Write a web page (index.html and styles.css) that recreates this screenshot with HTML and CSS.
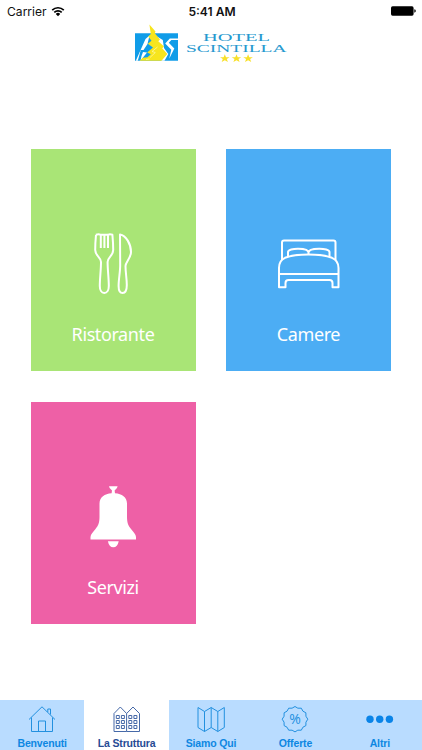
FILE: index.html
```html
<!DOCTYPE html>
<html lang="it">
<head>
    <meta charset="UTF-8">
    <meta name="viewport" content="width=device-width, initial-scale=1.0">
    <title>Hotel Scintilla</title>
    <link rel="stylesheet" href="styles.css">
</head>
<body>
    <div class="status">
        <div class="carrier">
            <span>Carrier</span>
            <svg class="wifi" width="14" height="11" viewBox="0 0 14 11">
                <path d="M1.2 4.1A8.3 8.3 0 0 1 12.8 4.1M3.3 6.3A5.3 5.3 0 0 1 10.7 6.3"/>
                <path class="dot" d="M7 10.2L4.8 7.9A3.2 3.2 0 0 1 9.2 7.9Z"/>
            </svg>
        </div>
        <div class="time">5:41 AM</div>
        <svg class="battery" width="25" height="10" viewBox="0 0 25 10">
            <rect x="0" y="0.3" width="22.6" height="9.4" rx="1.6"/>
            <path d="M23.3 3.3Q24.8 3.6 24.8 5T23.3 6.7Z"/>
        </svg>
    </div>

    <div class="header">
        <svg width="154" height="40" viewBox="134 24 154 40">
            <path class="logo-blue" d="M135 33.2H178V60.8H135Z"/>
            <path class="logo-white" d="M135.8 60.8L145.5 39L149.5 35.5L147.5 44L143.5 50H140.8L137.8 60.8Z"/>
            <path class="logo-white" d="M143 52L147 52.5L143 57.5L140.5 60.8L141.5 56Z"/>
            <path class="logo-white" d="M157 36.5L162.8 40L164 48L168.3 54L164.5 60.8H161L164 55L159 50L161 47L154 42Z"/>
            <path class="logo-white" d="M178 40H171.3L168.8 42.8L174.3 48.5L169.2 58.8L171.3 49.8L165.2 43.5L169.8 38.4H178Z"/>
            <path class="logo-bolt" d="M149.4 24.6L155.5 31.5L154.8 33.2L160 39.5L158.3 41.2L164 46.5L162.2 48.2L167.3 54L161.5 60.8H139.5L142.8 57.8L147.5 57.3L150.8 54.2L147.2 52.6L153 47.5L147.8 43.8L151.5 40.8L148.3 36.5L150.8 34Z"/>
            <path class="logo-cut" d="M150 57.5L155.3 52.5L152 51.5L157.5 47M146 59.5L149.5 59"/>
            <text x="203" y="40.8" textLength="67" lengthAdjust="spacingAndGlyphs">HOTEL</text>
            <text x="186" y="52.1" textLength="100.5" lengthAdjust="spacingAndGlyphs">SCINTILLA</text>
            <g class="stars">
                <path id="star" d="M224.8 54.2L226 57.3H229.6L226.8 59.1L227.9 62L224.8 60.3L221.7 62L222.8 59.1L220 57.3H223.6Z"/>
                <use href="#star" x="11.7"/>
                <use href="#star" x="23.3"/>
            </g>
        </svg>
    </div>

    <div class="tiles">
        <div class="tile green">
            <svg width="70" height="66" viewBox="78 231 70 66">
                <path d="M96 234.8Q95.2 243 95.2 250C95.2 256 101 257 101 262C101 270 99.8 278 99.8 286C99.8 290 101.5 293 104.3 293S108.8 290 108.8 286C108.8 278 107.6 270 107.6 262C107.6 257 113.2 256 113.2 250Q113.2 243 112.4 234.8Q109.8 233.8 108 234.8V248M96 234.8Q98.5 233.8 100.8 234.8V248M104.4 234.5V248M100.8 234.8H108"/>
                <path d="M120 234.5C126 235.5 131 244 131 252C131 258 125.5 262 125.5 266C125.5 273 126.8 278 126.8 285C126.8 290 125.3 293 122.6 293S118.6 290 118.6 286C118.6 279 120.2 272 120.2 265Z"/>
            </svg>
            <span>Ristorante</span>
        </div>
        <div class="tile blue">
            <svg width="70" height="66" viewBox="274 231 70 66">
                <path d="M282 260V242.5Q282 240.5 284 240.5H333.5Q335.5 240.5 335.5 242.5V260"/>
                <path d="M288 256.5V252C288 247.5 308.5 247.5 308.5 252.5V254M308.5 252.5C308.5 247.5 329.5 247.5 329.5 252V256.5"/>
                <path d="M279 287.2V268C279 262 281 259.5 285 257.8C297 253.5 320 253.5 332 257.8C336 259.5 338.5 262 338.5 268V287.2H332.5V283Q332.5 280 329.5 280H288.5Q285.5 280 285.5 283V287.2ZM279 274H338.5"/>
            </svg>
            <span>Camere</span>
        </div>
        <div class="tile pink">
            <svg width="70" height="66" viewBox="78 484 70 66">
                <path class="solid" d="M109 486.2H117.6Q117.6 488.2 114.6 490.6L115 493.3C122 494 126.8 497 127 503.5V517C127 523 128.5 526 131 529C133.6 532 135.8 534.5 136 537V539.4H90.5V537C90.7 534.5 92.9 532 95.5 529C98 526 99.5 523 99.5 517V503.5C99.7 497 104.5 494 111.6 493.3L112 490.6Q109 488.2 109 486.2Z"/>
                <path class="solid" d="M107.9 541.2H118.7Q117.5 547.2 113.3 547.2T107.9 541.2Z"/>
            </svg>
            <span>Servizi</span>
        </div>
    </div>

    <div class="tabs">
        <div class="tab">
            <svg width="30" height="30" viewBox="27 704 30 30">
                <path d="M29 719.5L42 706.8L55 719.5M31.5 717.5V731.5H52.5V717.5M38.5 731.5V721H45.5V731.5M47.8 712V709H50.5V714.5"/>
            </svg>
            <span>Benvenuti</span>
        </div>
        <div class="tab active">
            <svg width="30" height="30" viewBox="112 704 30 30">
                <path d="M114 731.5V713.5L120.3 707L126.6 713.5V731.5ZM126.6 713.5L133 707L139.5 713.5V731.5H126.6"/>
                <path d="M116.3 715.5H119.3V718.5H116.3ZM121.4 715.5H124.4V718.5H121.4ZM128.8 715.5H131.8V718.5H128.8ZM133.9 715.5H136.9V718.5H133.9ZM116.3 720.5H119.3V723.5H116.3ZM121.4 720.5H124.4V723.5H121.4ZM128.8 720.5H131.8V723.5H128.8ZM133.9 720.5H136.9V723.5H133.9ZM116.3 725.5H119.3V728.5H116.3ZM121.4 725.5H124.4V728.5H121.4ZM128.8 725.5H131.8V728.5H128.8ZM133.9 725.5H136.9V728.5H133.9Z"/>
            </svg>
            <span>La Struttura</span>
        </div>
        <div class="tab">
            <svg width="30" height="30" viewBox="196 704 30 30">
                <path d="M198 707.5L204.5 711.5L211.2 707.5L217.8 711.5L224.3 707.5V727.5L217.8 731.5L211.2 727.5L204.5 731.5L198 727.5ZM204.5 711.5V731.5M211.2 707.5V727.5M217.8 711.5V731.5"/>
            </svg>
            <span>Siamo Qui</span>
        </div>
        <div class="tab">
            <svg width="30" height="30" viewBox="280 704 30 30">
                <path d="M295 706.5Q297.5 709 301.3 708.2Q302.2 711.8 305.9 712.8Q305 716.5 307.8 719.2Q305 722 305.9 725.6Q302.2 726.6 301.3 730.2Q297.5 729.3 295 731.9Q292.3 729.3 288.7 730.2Q287.7 726.6 284.1 725.6Q285 722 282.2 719.2Q285 716.5 284.1 712.8Q287.7 711.8 288.7 708.2Q292.3 709 295 706.5Z"/>
                <text x="295" y="724.3" text-anchor="middle">%</text>
            </svg>
            <span>Offerte</span>
        </div>
        <div class="tab">
            <svg class="more" width="30" height="30" viewBox="365 704 30 30">
                <circle cx="370" cy="719.2" r="3.7"/>
                <circle cx="379.7" cy="719.2" r="3.7"/>
                <circle cx="389.4" cy="719.2" r="3.7"/>
            </svg>
            <span>Altri</span>
        </div>
    </div>
</body>
</html>
```
FILE: styles.css
```css
body {
    display: flex;
    flex-direction: column;
    height: 750px;
    margin: 0;
    background: #fff;
    font-family: "Liberation Sans", Arial, sans-serif;
    overflow: hidden;
}
svg {
    display: block;
}

/* status bar */
.status {
    display: grid;
    grid-template-columns: 1fr auto 1fr;
    align-items: center;
    height: 22px;
    padding: 0 6px 0 7px;
    font-family: Inter, sans-serif;
    font-size: 12.1px;
    color: #111;
}
.carrier {
    display: flex;
    align-items: center;
    gap: 4px;
}
.wifi {
    fill: none;
    stroke: #000;
    stroke-width: 1.7;
}
.wifi .dot {
    fill: #000;
    stroke: none;
}
.time {
    padding-left: 1px;
    font-weight: 600;
}
.battery {
    justify-self: end;
}

/* logo */
.header {
    height: 127px;
    padding: 2px 0 0 134px;
    box-sizing: border-box;
}
.header text {
    font-family: "Liberation Serif", serif;
    font-size: 11px;
    fill: #2799cf;
}
.logo-blue {
    fill: #109ce8;
}
.logo-white {
    fill: #fff;
}
.logo-bolt {
    fill: #f7e51e;
}
.logo-cut {
    fill: none;
    stroke: #fff8a0;
    stroke-width: 0.8;
}
.stars {
    fill: #f8e02a;
}

/* tiles */
.tiles {
    flex: 1;
    display: grid;
    grid-template-columns: 165px 165px;
    grid-auto-rows: 222px;
    align-content: start;
    gap: 30.5px;
    padding-left: 30.5px;
}
.tile {
    display: flex;
    flex-direction: column;
    align-items: center;
    gap: 23px;
    padding-top: 82px;
    box-sizing: border-box;
    color: #fff;
    font-family: "Noto Sans", sans-serif;
    font-size: 18px;
    letter-spacing: -0.4px;
    line-height: 28px;
}
.tile svg {
    fill: none;
    stroke: #fff;
    stroke-width: 2;
    stroke-linejoin: round;
}
.tile .solid {
    fill: #fff;
    stroke: none;
}
.green {
    background: #a9e576;
}
.blue {
    background: #4cadf4;
}
.pink {
    background: #ee60a6;
}

/* tab bar */
.tabs {
    display: flex;
    height: 50px;
    background: #b9dcff;
}
.tab {
    flex: 1;
    display: flex;
    flex-direction: column;
    align-items: center;
    gap: 4px;
    padding-top: 4px;
    color: #0d87e2;
    font-size: 10.5px;
    font-weight: bold;
    letter-spacing: -0.15px;
    line-height: 11px;
}
.tab svg {
    fill: none;
    stroke: #2290df;
    stroke-width: 1;
}
.tab text {
    fill: #2290df;
    stroke: none;
    font-family: "Open Sans", sans-serif;
    font-size: 14px;
    font-weight: normal;
}
.tab .more {
    fill: #0a84e8;
    stroke: none;
}
.tab.active {
    background: #fff;
    color: #274b94;
}
.tab.active svg {
    stroke: #4669a8;
}
```
